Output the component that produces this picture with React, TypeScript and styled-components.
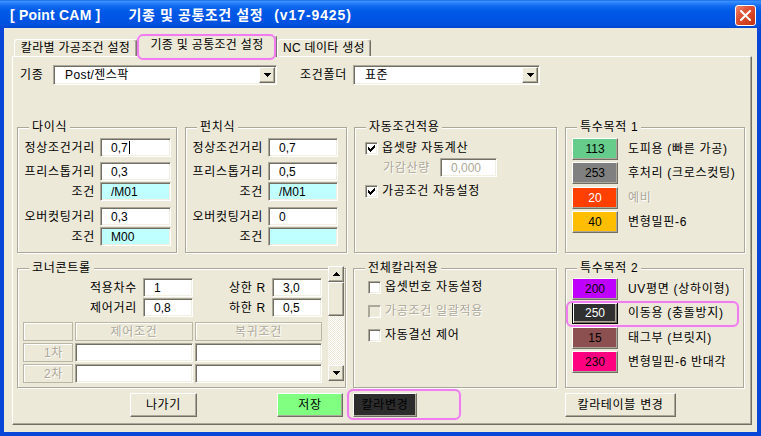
import React from "react";
import styled, { createGlobalStyle, css } from "styled-components";

const FACE = "#ECE9D8";
const SHADOW = "#ACA899";
const DARK = "#716F64";
const LIGHT = "#F1EFE2";
const GRAY = "#ACA899";
const PINK = "#F07CF0";

const GlobalStyle = createGlobalStyle`
  html, body { margin: 0; padding: 0; background: #ffffff; }
  body {
    font-family: "Liberation Sans", "Noto Sans CJK KR", sans-serif;
    font-size: 12px;
    line-height: 14px;
    letter-spacing: 0.7px;
    color: #000;
  }
  *, *::before, *::after { box-sizing: border-box; }
`;

const raised = css`
  border: 1px solid;
  border-color: #ffffff ${DARK} ${DARK} #ffffff;
  box-shadow: inset -1px -1px ${SHADOW};
`;

const sunken = css`
  border: 1px solid;
  border-color: ${SHADOW} #ffffff #ffffff ${SHADOW};
  box-shadow: inset 1px 1px ${DARK}, inset -1px -1px ${LIGHT};
`;

const disabledText = css`
  color: ${GRAY};
  text-shadow: 1px 1px #ffffff;
`;

const pinkRing = css`
  content: "";
  position: absolute;
  border: 2px solid ${PINK};
  border-radius: 6px;
  box-shadow: 0 0 1px #f8b8f8, inset 0 0 1px #f8b8f8;
  pointer-events: none;
`;

const Window = styled.div`
  width: 761px;
  height: 436px;
  display: flex;
  flex-direction: column;
  background: #0846d8;
  overflow: hidden;
`;

const TitleBar = styled.div`
  height: 28px;
  flex: none;
  display: flex;
  align-items: center;
  padding: 2px 5px 0 10px;
  background: linear-gradient(
    to bottom,
    #0a5bdc 0px,
    #3e94ff 1px,
    #2b82fa 3px,
    #0f6af0 6px,
    #0058e6 12px,
    #0054e3 20px,
    #0050dc 25px,
    #0046d0 28px
  );
`;

const TitleText = styled.span<{ $ml?: number; $ls?: number }>`
  margin-left: ${(p) => p.$ml ?? 0}px;
  letter-spacing: ${(p) => p.$ls ?? 0}px;
  color: #ffffff;
  font-weight: bold;
  font-size: 14px;
  line-height: 16px;
  white-space: pre;
`;

const CloseButton = styled.div`
  margin-left: auto;
  width: 21px;
  height: 21px;
  border: 1px solid #ffffff;
  border-radius: 3px;
  background: linear-gradient(135deg, #ef8a6c 0%, #e0553a 35%, #d2401f 70%, #c13311 100%);
  display: flex;
  align-items: center;
  justify-content: center;
`;

const Client = styled.div`
  flex: 1;
  margin: 0 4px 4px;
  background: ${FACE};
  display: flex;
  flex-direction: column;
`;

const TabStrip = styled.div`
  display: flex;
  align-items: flex-end;
  height: 21px;
  margin: 7px 0 0 10px;
  position: relative;
  z-index: 1;
`;

const tabBase = css`
  display: flex;
  justify-content: center;
  background: ${FACE};
  border: 1px solid;
  border-bottom: none;
  border-color: #ffffff ${DARK} transparent #ffffff;
  box-shadow: inset -1px 0 ${SHADOW};
  border-radius: 3px 3px 0 0;
  white-space: nowrap;
  letter-spacing: 0.3px;
`;

const Tab = styled.div<{ $w: number }>`
  ${tabBase};
  width: ${(p) => p.$w}px;
  height: 17px;
  align-items: center;
`;

const ActiveTab = styled.div`
  ${tabBase};
  width: 140px;
  height: 22px;
  margin-bottom: -1px;
  padding-top: 2px;
  align-items: flex-start;
  position: relative;
  &::after {
    ${pinkRing};
    top: -2px;
    left: -1px;
    right: 0;
    bottom: -3px;
  }
`;

const Panel = styled.div`
  width: 740px;
  height: 369px;
  margin-left: 8px;
  border: 1px solid;
  border-color: #ffffff ${DARK} ${DARK} #ffffff;
  box-shadow: inset -1px -1px ${SHADOW};
  padding: 8px 0 0 4px;
  display: flex;
  flex-direction: column;
`;

const TopRow = styled.div`
  display: flex;
  align-items: center;
  height: 20px;
`;

const ComboLabel = styled.span<{ $w: number; $ml?: number }>`
  width: ${(p) => p.$w}px;
  margin-left: ${(p) => p.$ml ?? 0}px;
  padding-left: 3px;
  white-space: nowrap;
`;

const Combo = styled.div<{ $w: number }>`
  ${sunken};
  width: ${(p) => p.$w}px;
  height: 20px;
  background: #ffffff;
  display: flex;
  align-items: center;
  padding: 1px 1px 1px 11px;
  white-space: nowrap;
  letter-spacing: 0.4px;
`;

const DropButton = styled.div`
  ${raised};
  background: ${FACE};
  width: 16px;
  height: 16px;
  margin-left: auto;
  display: flex;
  align-items: center;
  justify-content: center;
`;

const GroupRow = styled.div<{ $mt: number }>`
  display: flex;
  margin-top: ${(p) => p.$mt}px;
`;

const GroupBox = styled.div<{ $w: number; $h: number; $ml?: number; $row?: boolean; $pt: number; $pl: number }>`
  position: relative;
  width: ${(p) => p.$w}px;
  height: ${(p) => p.$h}px;
  margin-left: ${(p) => p.$ml ?? 0}px;
  border: 1px solid ${SHADOW};
  box-shadow: inset 1px 1px #ffffff, 1px 1px #ffffff;
  display: flex;
  flex-direction: ${(p) => (p.$row ? "row" : "column")};
  padding: ${(p) => p.$pt}px 0 0 ${(p) => p.$pl}px;
`;

const Legend = styled.span`
  position: absolute;
  top: -8px;
  left: 11px;
  padding: 0 3px;
  background: ${FACE};
  line-height: 14px;
  white-space: nowrap;
`;

const FieldRow = styled.div<{ $mt?: number }>`
  display: flex;
  align-items: center;
  height: 19px;
  margin-top: ${(p) => p.$mt ?? 0}px;
`;

const RowLabel = styled.span<{ $w: number; $disabled?: boolean; $left?: number }>`
  width: ${(p) => p.$w}px;
  text-align: ${(p) => (p.$left !== undefined ? "left" : "right")};
  padding-left: ${(p) => p.$left ?? 0}px;
  white-space: nowrap;
  ${(p) => p.$disabled && disabledText};
`;

const TextBox = styled.div<{ $w: number; $bg?: string; $ml?: number; $disabled?: boolean }>`
  ${sunken};
  width: ${(p) => p.$w}px;
  height: 19px;
  margin-left: ${(p) => p.$ml ?? 5}px;
  background: ${(p) => p.$bg ?? "#ffffff"};
  display: flex;
  align-items: center;
  padding-left: 10px;
  white-space: nowrap;
  letter-spacing: 0;
  color: ${(p) => (p.$disabled ? GRAY : "#000")};
`;

const Caret = styled.span`
  display: inline-block;
  width: 1px;
  height: 13px;
  margin-left: 1px;
  background: #000;
`;

const CheckRow = styled.div<{ $mt?: number; $disabled?: boolean }>`
  display: flex;
  align-items: center;
  gap: 4px;
  height: 16px;
  margin-top: ${(p) => p.$mt ?? 0}px;
  white-space: nowrap;
  ${(p) => p.$disabled && disabledText};
`;

const CheckBox = styled.span<{ $disabled?: boolean }>`
  width: 13px;
  height: 13px;
  flex: none;
  border: 1px solid;
  border-color: ${SHADOW} #ffffff #ffffff ${SHADOW};
  box-shadow: ${(p) =>
    p.$disabled
      ? `inset 1px 1px ${SHADOW}, inset -1px -1px ${LIGHT}`
      : `inset 1px 1px ${DARK}, inset -1px -1px ${LIGHT}`};
  background: ${(p) => (p.$disabled ? FACE : "#ffffff")};
  display: flex;
  align-items: center;
  justify-content: center;
`;

const SpecialRow = styled.div<{ $mt?: number; $mark?: boolean }>`
  position: relative;
  display: flex;
  align-items: center;
  height: 22px;
  margin-top: ${(p) => p.$mt ?? 0}px;
  white-space: nowrap;
  ${(p) =>
    p.$mark &&
    css`
      &::after {
        ${pinkRing};
        top: -1px;
        left: -6px;
        width: 173px;
        bottom: -3px;
      }
    `}
`;

const ColorButton = styled.div<{ $bg: string; $fg: string; $focus?: boolean }>`
  width: 46px;
  height: 22px;
  flex: none;
  background: ${(p) => p.$bg};
  color: ${(p) => p.$fg};
  letter-spacing: 0;
  display: flex;
  align-items: center;
  justify-content: center;
  ${(p) =>
    p.$focus
      ? css`
          border: 1px solid #000;
          box-shadow: inset 1px 1px #ffffff, inset -1px -1px ${DARK}, inset -2px -2px ${SHADOW};
        `
      : raised};
`;

const SpecialLabel = styled.span<{ $disabled?: boolean }>`
  margin-left: 10px;
  ${(p) => p.$disabled && disabledText};
`;

const CornerBody = styled.div`
  display: flex;
  flex-direction: column;
  padding: 9px 0 0 5px;
`;

const CondGrid = styled.div`
  display: grid;
  grid-template-columns: 50px 118px 127px;
  grid-auto-rows: 19px;
  gap: 2px;
  margin-top: 5px;
`;

const HeadCell = styled.div<{ $align?: string }>`
  border: 1px solid #b9b6a6;
  box-shadow: inset 1px 1px #ffffff;
  display: flex;
  align-items: center;
  justify-content: ${(p) => p.$align ?? "center"};
  padding-right: ${(p) => (p.$align === "flex-end" ? 9 : 0)}px;
  white-space: nowrap;
  ${disabledText};
`;

const InputCell = styled.div`
  ${sunken};
  background: #ffffff;
`;

const Scrollbar = styled.div`
  width: 16px;
  height: 115px;
  margin: -3px 1px 0 auto;
  display: flex;
  flex-direction: column;
`;

const ScrollButton = styled.div<{ $h: number }>`
  ${raised};
  background: ${FACE};
  height: ${(p) => p.$h}px;
  flex: none;
  display: flex;
  align-items: center;
  justify-content: center;
`;

const ScrollTrack = styled.div`
  flex: 1;
  background: repeating-conic-gradient(#ffffff 0 25%, ${FACE} 0 50%) 0 0 / 2px 2px;
`;

const ButtonRow = styled.div`
  display: flex;
  margin-top: 5px;
  height: 24px;
`;

const PushButton = styled.div<{ $w: number; $ml: number; $bg?: string; $mark?: boolean }>`
  ${raised};
  position: relative;
  width: ${(p) => p.$w}px;
  height: 24px;
  margin-left: ${(p) => p.$ml}px;
  background: ${(p) => p.$bg ?? FACE};
  display: flex;
  align-items: center;
  justify-content: center;
  white-space: nowrap;
  ${(p) =>
    p.$mark &&
    css`
      &::after {
        ${pinkRing};
        top: -5px;
        left: -7px;
        right: -45px;
        bottom: -4px;
      }
    `}
`;

const DownArrow = () => (
  <svg width="7" height="4" viewBox="0 0 7 4" shapeRendering="crispEdges">
    <rect x="0" y="0" width="7" height="1" fill="#000" />
    <rect x="1" y="1" width="5" height="1" fill="#000" />
    <rect x="2" y="2" width="3" height="1" fill="#000" />
    <rect x="3" y="3" width="1" height="1" fill="#000" />
  </svg>
);

const UpArrow = () => (
  <svg width="7" height="4" viewBox="0 0 7 4" shapeRendering="crispEdges">
    <rect x="3" y="0" width="1" height="1" fill="#000" />
    <rect x="2" y="1" width="3" height="1" fill="#000" />
    <rect x="1" y="2" width="5" height="1" fill="#000" />
    <rect x="0" y="3" width="7" height="1" fill="#000" />
  </svg>
);

const checkRows: [number, number, number][] = [
  [0, 6, 6],
  [1, 5, 6],
  [2, 0, 0],
  [2, 4, 6],
  [3, 0, 1],
  [3, 3, 5],
  [4, 0, 4],
  [5, 1, 3],
  [6, 2, 2],
];

const CheckMark = () => (
  <svg width="7" height="7" viewBox="0 0 7 7" shapeRendering="crispEdges">
    {checkRows.map(([y, a, b], i) => (
      <rect key={i} x={a} y={y} width={b - a + 1} height={1} fill="#000" />
    ))}
  </svg>
);

const Check = ({ checked, disabled }: { checked?: boolean; disabled?: boolean }) => (
  <CheckBox $disabled={disabled}>{checked && <CheckMark />}</CheckBox>
);

type Field = { label: string; value: string; bg?: string; mt: number; caret?: boolean };

const dieFields: Field[] = [
  { label: "정상조건거리", value: "0,7", mt: 0, caret: true },
  { label: "프리스톱거리", value: "0,3", mt: 5 },
  { label: "조건", value: "/M01", bg: "#C0FFFF", mt: 1 },
  { label: "오버컷팅거리", value: "0,3", mt: 6 },
  { label: "조건", value: "M00", bg: "#C0FFFF", mt: 1 },
];

const punchFields: Field[] = [
  { label: "정상조건거리", value: "0,7", mt: 0 },
  { label: "프리스톱거리", value: "0,5", mt: 5 },
  { label: "조건", value: "/M01", bg: "#C0FFFF", mt: 1 },
  { label: "오버컷팅거리", value: "0", mt: 6 },
  { label: "조건", value: "", bg: "#C0FFFF", mt: 1 },
];

type Special = { n: string; bg: string; fg: string; label: string; disabled?: boolean; focus?: boolean };

const special1: Special[] = [
  { n: "113", bg: "#66CC8C", fg: "#000", label: "도피용 (빠른 가공)" },
  { n: "253", bg: "#808080", fg: "#000", label: "후처리 (크로스컷팅)" },
  { n: "20", bg: "#FF4000", fg: "#fff", label: "예비", disabled: true },
  { n: "40", bg: "#FFBF00", fg: "#000", label: "변형밀핀-6" },
];

const special2: Special[] = [
  { n: "200", bg: "#BF00FF", fg: "#000", label: "UV평면 (상하이형)" },
  { n: "250", bg: "#303030", fg: "#fff", label: "이동용 (충돌방지)", focus: true },
  { n: "15", bg: "#8C5050", fg: "#000", label: "태그부 (브릿지)" },
  { n: "230", bg: "#FF0080", fg: "#000", label: "변형밀핀-6 반대각" },
];

const FieldList = ({ fields, inputW }: { fields: Field[]; inputW: number }) => (
  <>
    {fields.map((f, i) => (
      <FieldRow key={i} $mt={f.mt}>
        <RowLabel $w={77}>{f.label}</RowLabel>
        <TextBox $w={inputW} $bg={f.bg}>
          {f.value}
          {f.caret && <Caret />}
        </TextBox>
      </FieldRow>
    ))}
  </>
);

const SpecialList = ({ items }: { items: Special[] }) => (
  <>
    {items.map((s, i) => (
      <SpecialRow key={s.n} $mt={i === 0 ? 0 : 2.3} $mark={s.focus}>
        <ColorButton $bg={s.bg} $fg={s.fg} $focus={s.focus}>
          {s.n}
        </ColorButton>
        <SpecialLabel $disabled={s.disabled}>{s.label}</SpecialLabel>
      </SpecialRow>
    ))}
  </>
);

export default function App() {
  return (
    <>
      <GlobalStyle />
      <Window>
        <TitleBar>
          <TitleText $ls={0.2}>[ Point CAM ]</TitleText>
          <TitleText $ml={28} $ls={0.6}>
            기종 및 공통조건 설정
          </TitleText>
          <TitleText $ml={11} $ls={0.9}>
            (v17-9425)
          </TitleText>
          <CloseButton>
            <svg width="11" height="11" viewBox="0 0 11 11">
              <path d="M1 1L10 10M10 1L1 10" stroke="#fff" strokeWidth="2" strokeLinecap="square" />
            </svg>
          </CloseButton>
        </TitleBar>
        <Client>
          <TabStrip>
            <Tab $w={123}>칼라별 가공조건 설정</Tab>
            <ActiveTab>기종 및 공통조건 설정</ActiveTab>
            <Tab $w={94}>NC 데이타 생성</Tab>
          </TabStrip>
          <Panel>
            <TopRow>
              <ComboLabel $w={36}>기종</ComboLabel>
              <Combo $w={224}>
                Post/젠스팍
                <DropButton>
                  <DownArrow />
                </DropButton>
              </Combo>
              <ComboLabel $w={56} $ml={20}>
                조건폴더
              </ComboLabel>
              <Combo $w={187}>
                표준
                <DropButton>
                  <DownArrow />
                </DropButton>
              </Combo>
            </TopRow>

            <GroupRow $mt={42}>
              <GroupBox $w={160} $h={126} $pt={10} $pl={0}>
                <Legend>다이식</Legend>
                <FieldList fields={dieFields} inputW={71} />
              </GroupBox>
              <GroupBox $w={162} $h={126} $ml={8} $pt={10} $pl={0}>
                <Legend>펀치식</Legend>
                <FieldList fields={punchFields} inputW={70} />
              </GroupBox>
              <GroupBox $w={203} $h={126} $ml={7} $pt={12} $pl={10}>
                <Legend>자동조건적용</Legend>
                <CheckRow>
                  <Check checked />
                  옵셋량 자동계산
                </CheckRow>
                <FieldRow $mt={2}>
                  <RowLabel $w={75} $disabled $left={18}>
                    가감산량
                  </RowLabel>
                  <TextBox $w={57} $ml={0} $disabled>
                    0,000
                  </TextBox>
                </FieldRow>
                <CheckRow $mt={6}>
                  <Check checked />
                  가공조건 자동설정
                </CheckRow>
              </GroupBox>
              <GroupBox $w={180} $h={126} $ml={8} $pt={10} $pl={6}>
                <Legend>특수목적 1</Legend>
                <SpecialList items={special1} />
              </GroupBox>
            </GroupRow>

            <GroupRow $mt={15}>
              <GroupBox $w={329} $h={120} $row $pt={0} $pl={0}>
                <Legend>코너콘트롤</Legend>
                <CornerBody>
                  <FieldRow>
                    <RowLabel $w={114}>적용차수</RowLabel>
                    <TextBox $w={50} $ml={6}>
                      1
                    </TextBox>
                    <RowLabel $w={73}>상한 R</RowLabel>
                    <TextBox $w={50} $ml={6}>
                      3,0
                    </TextBox>
                  </FieldRow>
                  <FieldRow $mt={1}>
                    <RowLabel $w={114}>제어거리</RowLabel>
                    <TextBox $w={50} $ml={6}>
                      0,8
                    </TextBox>
                    <RowLabel $w={73}>하한 R</RowLabel>
                    <TextBox $w={50} $ml={6}>
                      0,5
                    </TextBox>
                  </FieldRow>
                  <CondGrid>
                    <HeadCell />
                    <HeadCell>제어조건</HeadCell>
                    <HeadCell>복귀조건</HeadCell>
                    <HeadCell $align="flex-end">1차</HeadCell>
                    <InputCell />
                    <InputCell />
                    <HeadCell $align="flex-end">2차</HeadCell>
                    <InputCell />
                    <InputCell />
                  </CondGrid>
                </CornerBody>
                <Scrollbar>
                  <ScrollButton $h={16}>
                    <UpArrow />
                  </ScrollButton>
                  <ScrollButton $h={34} />
                  <ScrollTrack />
                  <ScrollButton $h={16}>
                    <DownArrow />
                  </ScrollButton>
                </Scrollbar>
              </GroupBox>
              <GroupBox $w={204} $h={120} $ml={7} $pt={10} $pl={14}>
                <Legend>전체칼라적용</Legend>
                <CheckRow>
                  <Check />
                  옵셋번호 자동설정
                </CheckRow>
                <CheckRow $mt={8} $disabled>
                  <Check disabled />
                  가공조건 일괄적용
                </CheckRow>
                <CheckRow $mt={8}>
                  <Check />
                  자동결선 제어
                </CheckRow>
              </GroupBox>
              <GroupBox $w={179} $h={120} $ml={8} $pt={9} $pl={6}>
                <Legend>특수목적 2</Legend>
                <SpecialList items={special2} />
              </GroupBox>
            </GroupRow>

            <ButtonRow>
              <PushButton $w={67} $ml={113}>
                나가기
              </PushButton>
              <PushButton $w={66} $ml={80} $bg="#80FF80">
                저장
              </PushButton>
              <PushButton $w={64} $ml={10} $bg="#2C2C2C" $mark>
                칼라변경
              </PushButton>
              <PushButton $w={111} $ml={148}>
                칼라테이블 변경
              </PushButton>
            </ButtonRow>
          </Panel>
        </Client>
      </Window>
    </>
  );
}
